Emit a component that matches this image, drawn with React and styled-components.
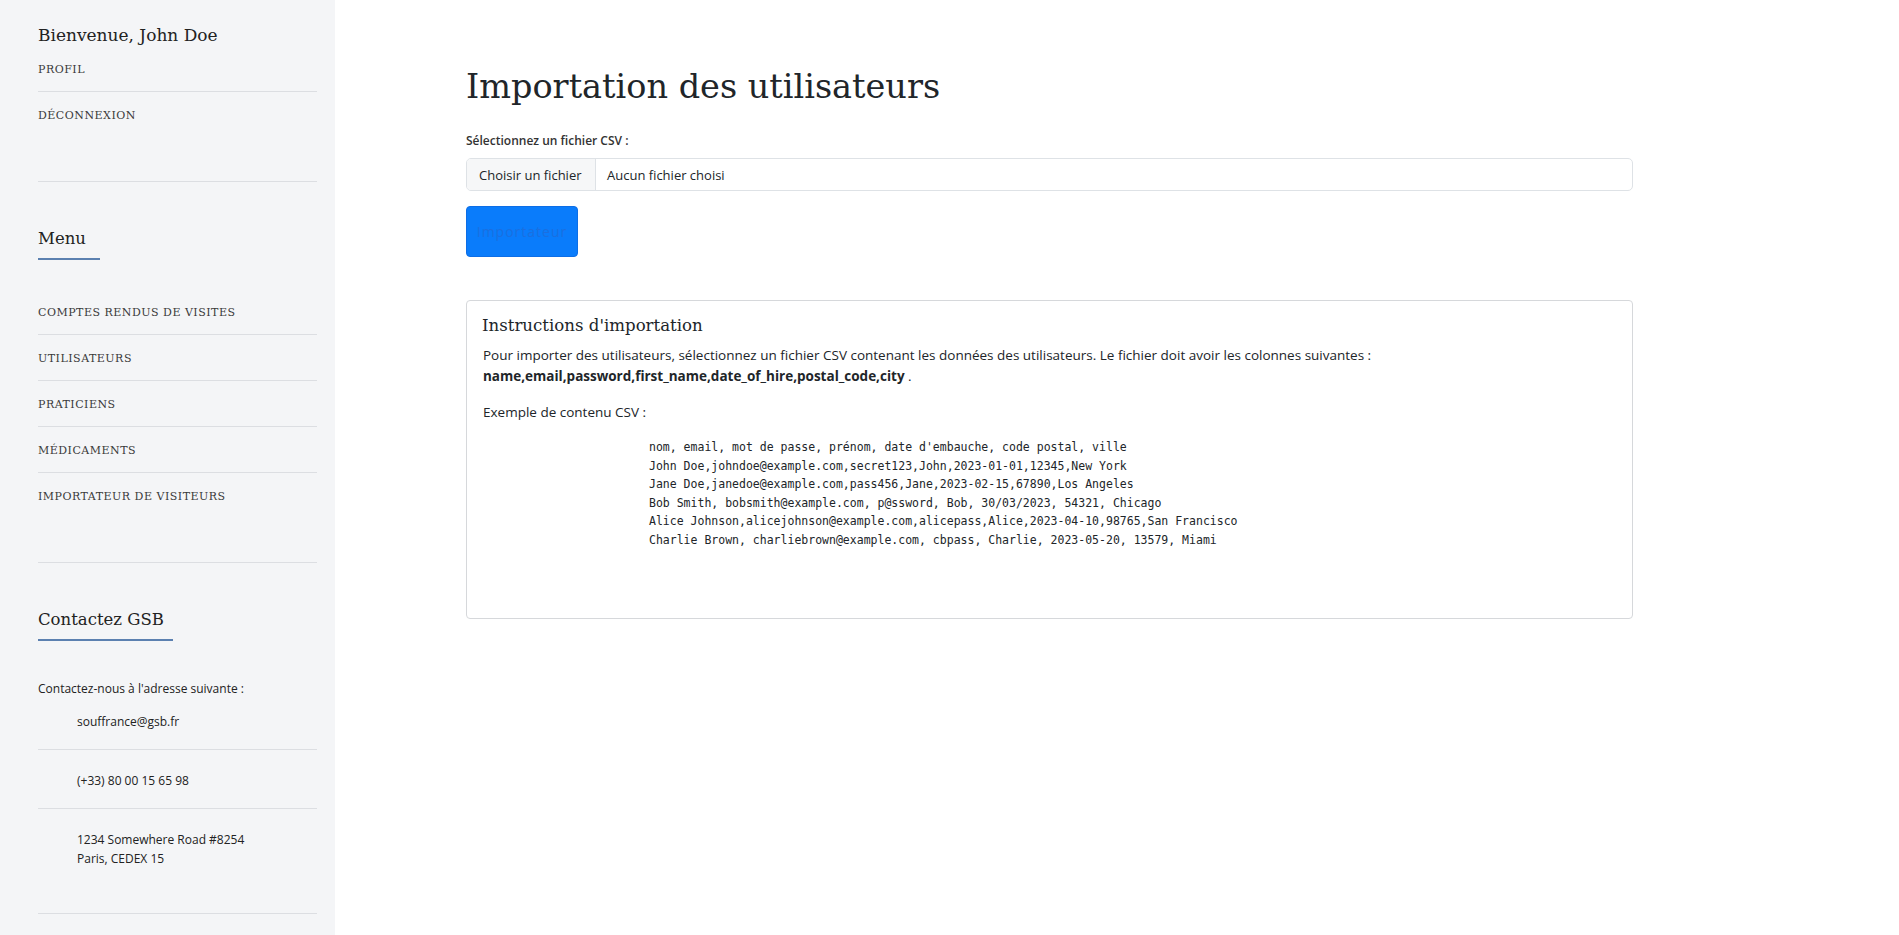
import React from 'react';
import styled, { createGlobalStyle } from 'styled-components';

const GlobalStyle = createGlobalStyle`
  html, body {
    margin: 0;
    padding: 0;
    background: #ffffff;
  }
  body {
    font-family: 'Open Sans', 'Noto Sans', sans-serif;
    color: #212529;
  }
  * {
    box-sizing: border-box;
  }
`;

const SLAB = `'DejaVu Serif', 'Liberation Serif', serif`;
const SANS = `'Open Sans', 'Noto Sans', sans-serif`;
const MONO = `'DejaVu Sans Mono', 'Liberation Mono', monospace`;

// LAYOUT
const Page = styled.div`
  display: flex;
  min-height: 100vh;
`;

const Sidebar = styled.aside`
  flex: 0 0 335px;
  background: #f4f5f7;
  padding: 24px 18px 22px 38px;
  display: flex;
  flex-direction: column;
`;

const Main = styled.main`
  flex: 1;
  padding: 63px 0 0 131px;
`;

const Content = styled.div`
  width: 1167px;
  display: flex;
  flex-direction: column;
`;

// SIDEBAR PARTS
const Welcome = styled.h3`
  margin: 0;
  font-family: ${SLAB};
  font-weight: 400;
  font-size: 17px;
  line-height: 23px;
  color: #222;
`;

const SectionTitle = styled.h3`
  align-self: flex-start;
  margin: 45px 0 29px;
  padding-bottom: 7px;
  font-family: ${SLAB};
  font-weight: 400;
  font-size: 16.5px;
  line-height: 24px;
  color: #222;
  border-bottom: 2px solid #5b80b0;
  width: ${(p) => p.$lineWidth};
  white-space: nowrap;
`;

const NavList = styled.ul`
  list-style: none;
  margin: 0;
  padding: 0;
`;

const NavItem = styled.li`
  padding: 14px 0 11px;
  border-bottom: 1px solid ${(p) => (p.$last ? 'transparent' : '#dcdee2')};

  &:first-child {
    padding-top: ${(p) => p.$firstTop || '14px'};
  }
`;

const NavLink = styled.a`
  display: block;
  font-family: ${SLAB};
  font-size: 11px;
  line-height: 20px;
  letter-spacing: 0.5px;
  text-transform: uppercase;
  color: #3a3a3a;
  text-decoration: none;
`;

const Separator = styled.hr`
  margin: ${(p) => p.$top} 0 0;
  border: 0;
  border-top: 1px solid #dcdee2;
`;

const ContactIntro = styled.p`
  margin: 9px 0 0;
  font-family: ${SANS};
  font-size: 12px;
  line-height: 20px;
  color: #222;
`;

const ContactItem = styled.li`
  padding: 21px 0 18px 39px;
  font-family: ${SANS};
  font-size: 12px;
  line-height: 19px;
  color: #222;
  border-bottom: 1px solid ${(p) => (p.$last ? 'transparent' : '#dcdee2')};

  &:first-child {
    padding-top: 13px;
  }
`;

// MAIN PARTS
const PageTitle = styled.h1`
  margin: 0;
  font-family: ${SLAB};
  font-weight: 400;
  font-size: 33.5px;
  line-height: 48px;
  color: #212529;
`;

const Label = styled.label`
  margin-top: 20px;
  font-family: ${SANS};
  font-weight: 600;
  font-size: 12px;
  line-height: 20px;
  color: #333;
`;

const FileField = styled.div`
  margin-top: 7px;
  display: flex;
  height: 33px;
  border: 1px solid #dee2e6;
  border-radius: 5px;
  overflow: hidden;
  font-family: ${SANS};
  font-size: 13px;
  color: #212529;
`;

const FileButton = styled.span`
  display: flex;
  align-items: center;
  padding: 0 12px;
  width: 129px;
  background: #f6f7f8;
  border-right: 1px solid #dee2e6;
`;

const FileName = styled.span`
  display: flex;
  align-items: center;
  padding: 0 11px;
`;

const SubmitButton = styled.button`
  align-self: flex-start;
  margin-top: 15px;
  width: 112px;
  height: 51px;
  background: #0a7cfb;
  border: 1px solid #0d6ee6;
  border-radius: 4px;
  font-family: ${SANS};
  font-size: 14px;
  letter-spacing: 1px;
  color: #1a6fe0;
`;

const Card = styled.section`
  margin-top: 43px;
  padding: 14px 16px 16px 15px;
  border: 1px solid #d6d8db;
  border-radius: 4px;
`;

const CardTitle = styled.h5`
  margin: 0 0 8px;
  font-family: ${SLAB};
  font-weight: 400;
  font-size: 16.6px;
  line-height: 22px;
  color: #212529;
`;

const Text = styled.p`
  margin: ${(p) => p.$margin || '0'};
  padding-left: 1px;
  font-family: ${SANS};
  font-size: 13.5px;
  line-height: 21px;
  color: #212529;
`;

const Pre = styled.pre`
  margin: 15px 0 52px;
  padding-left: 167px;
  font-family: ${MONO};
  font-size: 11.5px;
  line-height: 18.6px;
  color: #212529;
`;

// DATA
const accountLinks = ['Profil', 'Déconnexion'];

const menuLinks = [
  'Comptes rendus de visites',
  'Utilisateurs',
  'Praticiens',
  'Médicaments',
  'Importateur de visiteurs',
];

const csvSample = [
  "nom, email, mot de passe, prénom, date d'embauche, code postal, ville",
  'John Doe,johndoe@example.com,secret123,John,2023-01-01,12345,New York',
  'Jane Doe,janedoe@example.com,pass456,Jane,2023-02-15,67890,Los Angeles',
  'Bob Smith, bobsmith@example.com, p@ssword, Bob, 30/03/2023, 54321, Chicago',
  'Alice Johnson,alicejohnson@example.com,alicepass,Alice,2023-04-10,98765,San Francisco',
  'Charlie Brown, charliebrown@example.com, cbpass, Charlie, 2023-05-20, 13579, Miami',
].join('\n');

function App() {
  return (
    <>
      <GlobalStyle />
      <Page>
        <Sidebar>
          <Welcome>Bienvenue, John Doe</Welcome>
          <NavList>
            {accountLinks.map((label, i) => (
              <NavItem key={label} $last={i === accountLinks.length - 1} $firstTop='13px'>
                <NavLink href='#'>{label}</NavLink>
              </NavItem>
            ))}
          </NavList>
          <Separator $top='43px' />

          <SectionTitle $lineWidth='62px'>Menu</SectionTitle>
          <NavList>
            {menuLinks.map((label, i) => (
              <NavItem key={label} $last={i === menuLinks.length - 1}>
                <NavLink href='#'>{label}</NavLink>
              </NavItem>
            ))}
          </NavList>
          <Separator $top='43px' />

          <SectionTitle $lineWidth='135px'>Contactez GSB</SectionTitle>
          <ContactIntro>Contactez-nous à l'adresse suivante :</ContactIntro>
          <NavList>
            <ContactItem>souffrance@gsb.fr</ContactItem>
            <ContactItem>(+33) 80 00 15 65 98</ContactItem>
            <ContactItem $last>
              1234 Somewhere Road #8254
              <br />
              Paris, CEDEX 15
            </ContactItem>
          </NavList>
          <Separator $top='26px' />
        </Sidebar>

        <Main>
          <Content>
            <PageTitle>Importation des utilisateurs</PageTitle>
            <Label htmlFor='csv'>Sélectionnez un fichier CSV :</Label>
            <FileField id='csv'>
              <FileButton>Choisir un fichier</FileButton>
              <FileName>Aucun fichier choisi</FileName>
            </FileField>
            <SubmitButton type='button'>Importateur</SubmitButton>

            <Card>
              <CardTitle>Instructions d'importation</CardTitle>
              <Text>
                Pour importer des utilisateurs, sélectionnez un fichier CSV contenant les données des
                utilisateurs. Le fichier doit avoir les colonnes suivantes :
                <br />
                <strong>name,email,password,first_name,date_of_hire,postal_code,city</strong> .
              </Text>
              <Text $margin='15px 0 0'>Exemple de contenu CSV :</Text>
              <Pre>{csvSample}</Pre>
            </Card>
          </Content>
        </Main>
      </Page>
    </>
  );
}

export default App;
